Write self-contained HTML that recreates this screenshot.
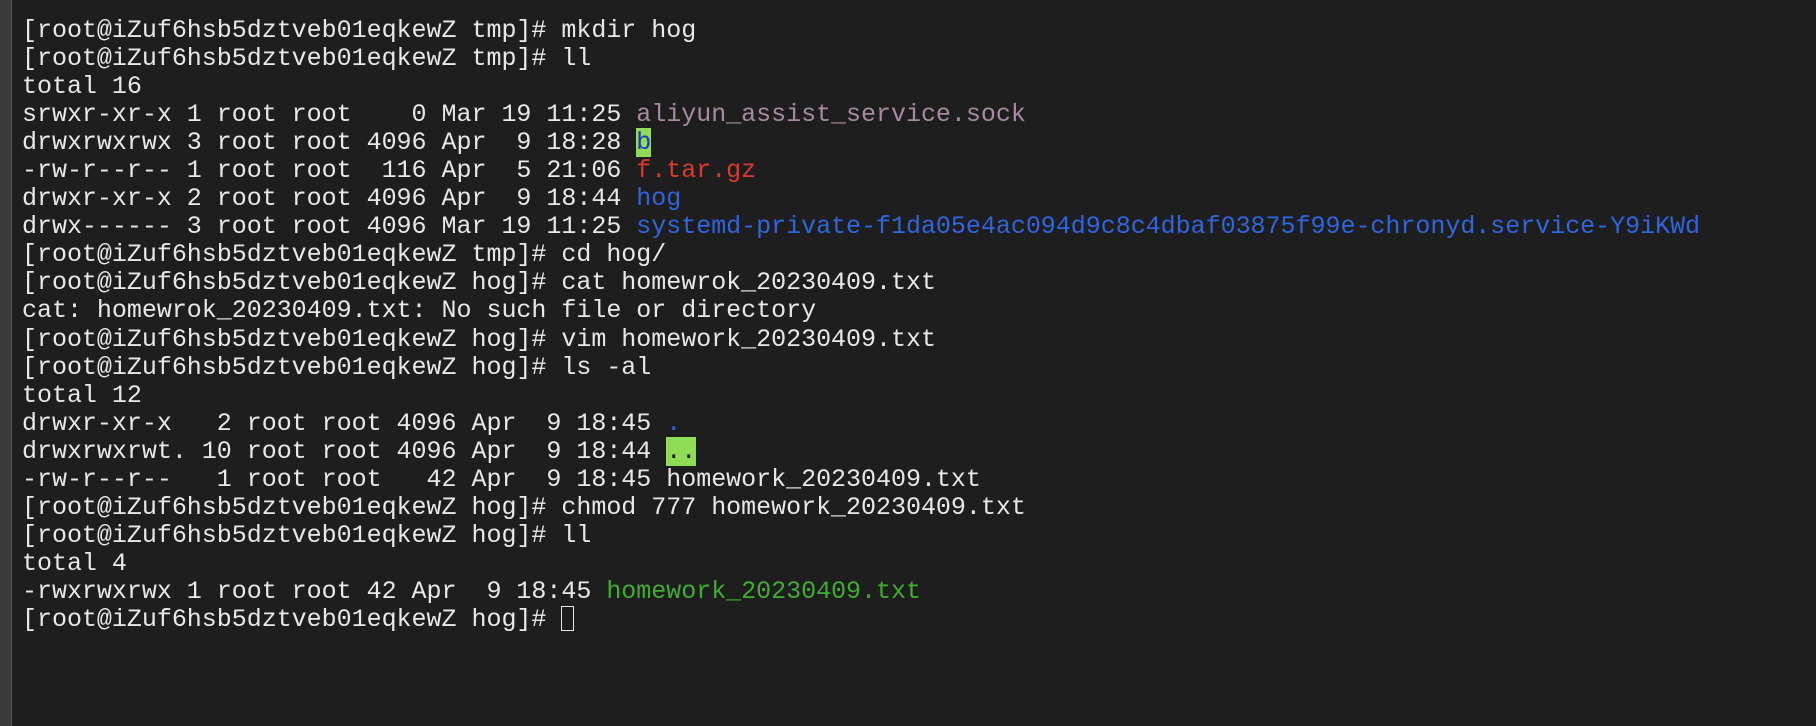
<!DOCTYPE html>
<html><head><meta charset="utf-8"><style>
html,body{margin:0;padding:0;width:1816px;height:726px;overflow:hidden;background:#1e1e1e}
.bar{position:absolute;left:0;top:0;width:11px;height:726px;background:#3a3a3a;border-right:1px solid #555}
pre{position:absolute;left:22px;top:17px;margin:0;font-family:"Liberation Mono",monospace;font-size:25px;line-height:28.05px;color:#e8e8e8;letter-spacing:-0.02px}
.p{color:#a88aa2}.bl{color:#2f66e0}.r{color:#dc3a2e}.g{color:#3fae30}
.hb{background:#8fdc55;color:#1838c8}.hd{background:#8fdc55;color:#1e1e1e}
.cur{display:inline-block;width:13px;height:25px;border:1.5px solid #e8e8e8;vertical-align:-5px;box-sizing:border-box}
</style></head><body><div class="bar"></div><pre>[root@iZuf6hsb5dztveb01eqkewZ tmp]# mkdir hog
[root@iZuf6hsb5dztveb01eqkewZ tmp]# ll
total 16
srwxr-xr-x 1 root root    0 Mar 19 11:25 <span class="p">aliyun_assist_service.sock</span>
drwxrwxrwx 3 root root 4096 Apr  9 18:28 <span class="hb">b</span>
-rw-r--r-- 1 root root  116 Apr  5 21:06 <span class="r">f.tar.gz</span>
drwxr-xr-x 2 root root 4096 Apr  9 18:44 <span class="bl">hog</span>
drwx------ 3 root root 4096 Mar 19 11:25 <span class="bl">systemd-private-f1da05e4ac094d9c8c4dbaf03875f99e-chronyd.service-Y9iKWd</span>
[root@iZuf6hsb5dztveb01eqkewZ tmp]# cd hog/
[root@iZuf6hsb5dztveb01eqkewZ hog]# cat homewrok_20230409.txt
cat: homewrok_20230409.txt: No such file or directory
[root@iZuf6hsb5dztveb01eqkewZ hog]# vim homework_20230409.txt
[root@iZuf6hsb5dztveb01eqkewZ hog]# ls -al
total 12
drwxr-xr-x   2 root root 4096 Apr  9 18:45 <span class="bl">.</span>
drwxrwxrwt. 10 root root 4096 Apr  9 18:44 <span class="hd">..</span>
-rw-r--r--   1 root root   42 Apr  9 18:45 homework_20230409.txt
[root@iZuf6hsb5dztveb01eqkewZ hog]# chmod 777 homework_20230409.txt
[root@iZuf6hsb5dztveb01eqkewZ hog]# ll
total 4
-rwxrwxrwx 1 root root 42 Apr  9 18:45 <span class="g">homework_20230409.txt</span>
[root@iZuf6hsb5dztveb01eqkewZ hog]# <span class="cur"></span></pre></body></html>
